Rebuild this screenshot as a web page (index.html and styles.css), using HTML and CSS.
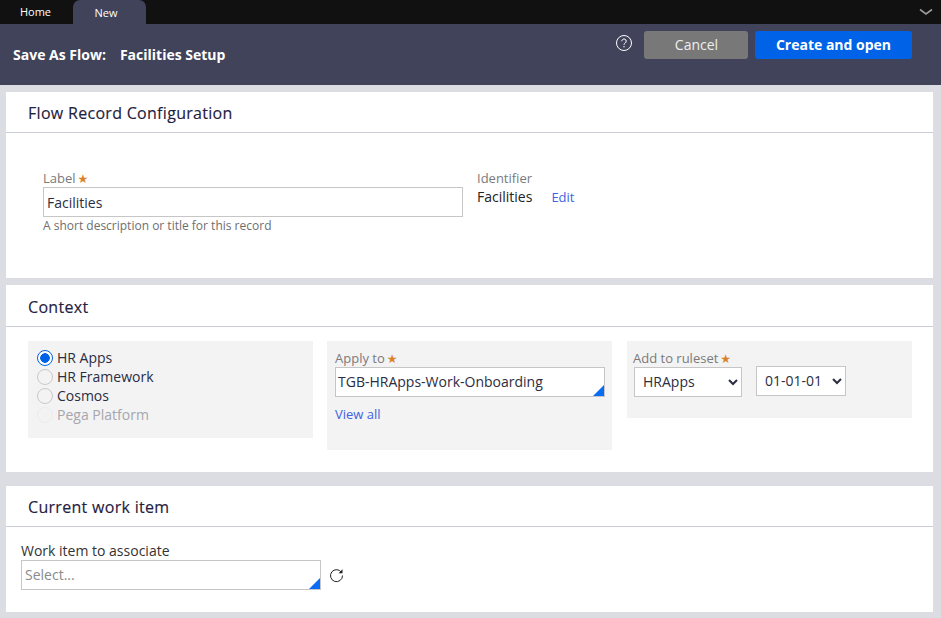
FILE: index.html
```html
<!DOCTYPE html>
<html lang="en">
<head>
<meta charset="utf-8">
<title>Save As Flow</title>
<link rel="stylesheet" href="styles.css">
</head>
<body>
<nav class="tabbar">
  <span class="tab">Home</span>
  <span class="tab tab-active">New</span>
  <svg class="tab-menu" width="14" height="8" viewBox="0 0 14 8"><path d="M1 1.5 7 6l6-4.500" fill="none" stroke="#9a9a9a" stroke-width="1.600"/></svg>
</nav>
<header class="pagehead">
  <h1 class="pagetitle"><span class="pagetitle-type">Save As Flow:</span><span>Facilities Setup</span></h1>
  <div class="actions">
    <svg class="help" width="18" height="18" viewBox="0 0 18 18"><circle cx="9" cy="9" r="7.500" fill="none" stroke="#fff" stroke-width="1"/><path d="M6.800 7.200a2.200 2.200 0 1 1 3.400 1.800c-.8.5-1.200.9-1.200 1.800" fill="none" stroke="#fff" stroke-width="1"/><circle cx="9" cy="12.800" r=".7" fill="#fff"/></svg>
    <button class="btn btn-cancel">Cancel</button>
    <button class="btn btn-primary">Create and open</button>
  </div>
</header>
<main class="content">
  <section class="panel panel-record">
    <h2 class="panel-title">Flow Record Configuration</h2>
    <div class="record-body">
      <div class="field-label-col">
        <label class="lbl">Label<span class="req">★</span></label>
        <input class="textinput" type="text" value="Facilities">
        <div class="hint">A short description or title for this record</div>
      </div>
      <div class="identifier">
        <div class="lbl">Identifier</div>
        <div class="identifier-row"><span>Facilities</span><a class="link">Edit</a></div>
      </div>
    </div>
  </section>

  <section class="panel panel-context">
    <h2 class="panel-title panel-title-tall">Context</h2>
    <div class="context-body">
      <div class="ctx ctx-radios">
        <div class="radio radio-on"><span class="dot"></span>HR Apps</div>
        <div class="radio"><span class="dot"></span>HR Framework</div>
        <div class="radio"><span class="dot"></span>Cosmos</div>
        <div class="radio radio-off"><span class="dot"></span>Pega Platform</div>
      </div>
      <div class="ctx ctx-apply">
        <label class="lbl">Apply to<span class="req">★</span></label>
        <div class="autocomplete"><input class="textinput textinput-raised" type="text" value="TGB-HRApps-Work-Onboarding"><span class="corner"></span></div>
        <a class="link viewall">View all</a>
      </div>
      <div class="ctx ctx-ruleset">
        <label class="lbl">Add to ruleset<span class="req">★</span></label>
        <div class="selects">
          <select class="sel sel-a"><option>HRApps</option></select>
          <select class="sel sel-b"><option>01-01-01</option></select>
        </div>
      </div>
    </div>
  </section>

  <section class="panel panel-work">
    <h2 class="panel-title">Current work item</h2>
    <div class="work-body">
      <label class="lbl lbl-dark">Work item to associate</label>
      <div class="work-row">
        <div class="autocomplete work-input"><input class="textinput textinput-raised" type="text" placeholder="Select..."><span class="corner"></span></div>
        <svg class="refresh" width="15" height="15" viewBox="0 0 15 15"><path d="M12.600 4.500A6 6 0 1 0 13.500 7.500" fill="none" stroke="#222" stroke-width="1"/><path d="M13.500 1.200v4H9.500z" fill="#222"/></svg>
      </div>
    </div>
  </section>
</main>
</body>
</html>
```
FILE: styles.css
```css
* { box-sizing: border-box; }
html, body { margin: 0; height: 100%; }
body {
  width: 941px;
  height: 618px;
  overflow: hidden;
  background: #dcdde3;
  font-family: "Open Sans", sans-serif;
  font-size: 14px;
  color: #2b2d42;
}
.tabbar {
  height: 24px;
  background: #111;
  display: flex;
  align-items: flex-end;
  position: relative;
}
.tab {
  width: 73px;
  height: 24px;
  color: #fff;
  font-size: 11px;
  line-height: 24px;
  text-align: center;
  padding-right: 2px;
}
.tab-active {
  background: #40435a;
  border-radius: 7px 7px 0 0;
  line-height: 26px;
  padding: 0 7px 0 0;
}
.tab-menu { position: absolute; right: 8px; top: 8px; }
.pagehead {
  height: 61px;
  background: #40435a;
  display: flex;
  justify-content: space-between;
  align-items: flex-start;
  padding: 7px 29px 0 13px;
}
.pagetitle {
  margin: 14px 0 0;
  font-size: 14px;
  line-height: 20px;
  font-weight: 700;
  color: #fff;
  display: flex;
  gap: 14px;
}
.actions { display: flex; align-items: center; }
.help { margin-right: 11px; margin-top: -5px; }
.btn {
  height: 28px;
  border: 0;
  border-radius: 3px;
  font-family: inherit;
  font-size: 14px;
  color: #fff;
  padding: 0 0 2px;
}
.btn-cancel { width: 104px; background: #787878; margin-right: 7px; color: #eee; padding-left: 1px; }
.btn-primary { width: 157px; background: #0062e6; font-weight: 700; }
.content { padding: 7px 8px 0 6px; }
.panel { background: #fff; }
.panel-record { height: 186px; margin-bottom: 7px; }
.panel-context { height: 187px; margin-bottom: 14px; }
.panel-work { height: 126px; }
.panel-title {
  margin: 0;
  height: 41px;
  border-bottom: 1px solid #cbccd6;
  padding: 9px 0 0 22px;
  font-size: 16px;
  line-height: 24px;
  font-weight: 400;
  letter-spacing: 0.3px;
  color: #1f2140;
  -webkit-text-stroke: 0.15px #1f2140;
}
.panel-title-tall { height: 42px; padding-top: 10px; }
.lbl {
  display: block;
  font-size: 13px;
  line-height: 18px;
  color: #7a7a7a;
}
.lbl-dark { color: #333; font-size: 14px; line-height: 19px; }
.req {
  margin-left: 2px;
  color: #d9822b;
  font-family: "DejaVu Sans", sans-serif;
  font-size: 12px;
  line-height: 10px;
}
.textinput {
  display: block;
  width: 100%;
  height: 30px;
  border: 1px solid #c6c6c6;
  border-radius: 0;
  background: #fff;
  padding: 0 3px;
  margin: 0;
  outline: 0;
  font-family: inherit;
  font-size: 14px;
  color: #2b2d42;
}
.textinput-raised { padding: 0 3px 2px; }
.textinput-raised[value] { padding-left: 2px; }
.textinput::placeholder { color: #8a8a8a; opacity: 1; }
.hint { font-size: 12px; line-height: 18px; color: #6e6e6e; }
.link { color: #3f62e0; font-size: 13px; }
.record-body { display: flex; padding: 36px 0 0 37px; }
.field-label-col { width: 420px; }
.identifier { margin-left: 14px; }
.identifier-row { display: flex; gap: 19px; align-items: center; line-height: 20px; color: #222; }
.context-body { display: flex; align-items: flex-start; padding: 14px 0 0 22px; gap: 14px; }
.ctx { background: #f3f3f3; width: 285px; flex: none; }
.ctx-radios { height: 97px; padding: 7px 0 0 9px; }
.ctx-apply { height: 109px; padding: 8px 7px 0 8px; }
.ctx-ruleset { height: 77px; padding: 8px 7px 0 6px; margin-left: 1px; }
.radio { display: flex; align-items: center; gap: 4px; height: 19px; line-height: 19px; color: #2b2d42; }
.dot {
  width: 16px;
  height: 16px;
  border-radius: 50%;
  border: 1px solid #c9c9c9;
  background: #f3f3f3;
}
.radio-on .dot { border: 1.500px solid #0062e6; background: radial-gradient(circle, #0062e6 0 4.500px, #fff 5px); }
.radio-off { color: #a6a6ae; }
.radio-off .dot { border-color: #ececec; }
.autocomplete { position: relative; }
.corner {
  position: absolute;
  right: 1px;
  bottom: 1px;
  width: 0;
  height: 0;
  border-left: 11px solid transparent;
  border-bottom: 11px solid #0a6cf2;
}
.viewall { display: block; margin-top: 8px; line-height: 18px; }
.selects { display: flex; gap: 14px; align-items: flex-start; margin-left: 1px; }
.sel {
  border: 1px solid #c6c6c6;
  border-radius: 0;
  background-color: #fff;
  font-family: inherit;
  font-size: 14px;
  color: #2b2d42;
  outline: 0;
}
.sel-a { width: 108px; height: 30px; padding: 0 0 1px 4px; }
.sel-b { width: 90px; height: 30px; margin-top: -1px; padding: 0 0 1px 4px; }
.work-body { padding: 14px 0 0 15px; }
.work-row { display: flex; align-items: center; }
.work-input { width: 300px; }
.refresh { margin-left: 8px; }
```
